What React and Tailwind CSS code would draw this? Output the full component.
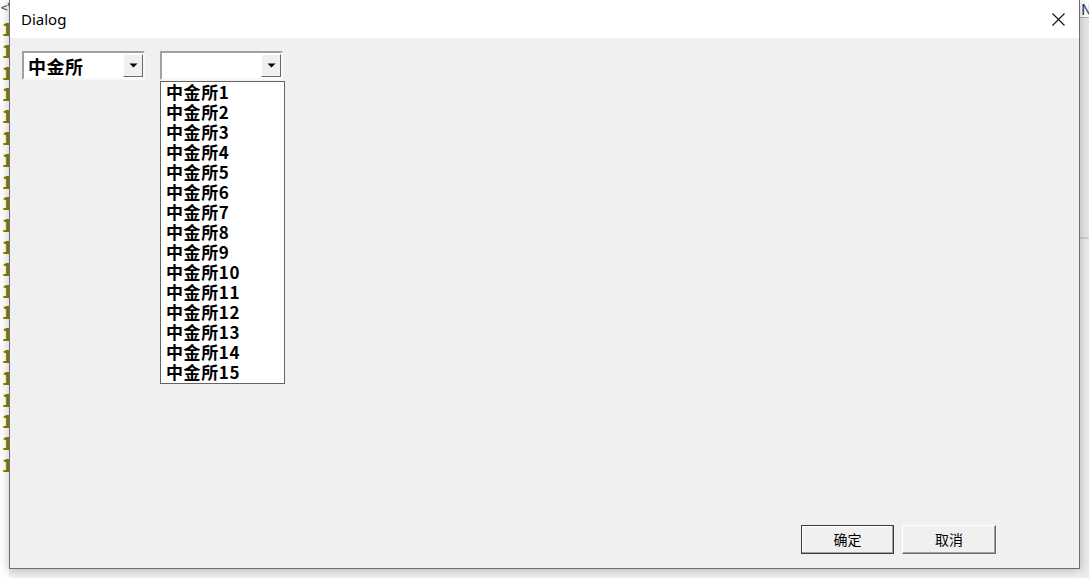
import React from 'react';

const exchanges = Array.from({ length: 15 }, (_, i) => `中金所${i + 1}`);
const marks = Array.from({ length: 21 }, (_, i) => i);

// small raised arrow button used by both combo boxes
const DropArrow = () => (
  <div className="w-[20px] h-[23px] bg-[#f0f0f0] border border-t-white border-l-white border-r-[#696969] border-b-[#696969] flex items-center justify-center">
    <svg width="9" height="5" viewBox="0 0 9 5">
      <path d="M0.5 0.5h8L4.5 4.5z" fill="#000" />
    </svg>
  </div>
);

const Combo = ({ value }) => (
  <div className="w-[123px] h-[29px] border-2 border-t-[#a0a0a0] border-l-[#a0a0a0] border-r-[#f8f8f8] border-b-[#f8f8f8] bg-white flex items-center justify-between">
    <span className="pl-[4px] text-[18px] font-bold leading-none tracking-[0.5px] text-black">{value}</span>
    <DropArrow />
  </div>
);

export default function App() {
  return (
    <div
      className="w-[1089px] h-[578px] bg-[#ececec] flex overflow-hidden"
      style={{ fontFamily: '"Noto Sans CJK SC", "Noto Sans", sans-serif' }}
    >
      {/* behind the dialog: left list window */}
      <div className="w-[9px] h-[578px] bg-white flex flex-col shrink-0 overflow-hidden">
        <div className="h-[19px] pl-[1px] text-[12px] leading-[14px] text-[#333]">&lt;V</div>
        {marks.map((m) => (
          <div key={m} className="h-[21.8px] pl-[2px] text-[17px] font-bold leading-[20px] text-[#808000] [text-shadow:1px_0_0_#00807f]">1</div>
        ))}
      </div>

      <div className="flex flex-col shrink-0">
        {/* the dialog window */}
        <div className="w-[1071px] h-[569px] border border-t-0 border-[#6e6e6e] flex flex-col shadow-[0_2px_10px_rgba(0,0,0,0.25)] relative z-10">
          <div className="h-[38px] bg-white flex items-center justify-between pl-[11px] pr-[14px]">
            <span className="text-[15px] text-black" style={{ fontFamily: '"Noto Sans", "Open Sans", sans-serif' }}>Dialog</span>
            <svg width="13" height="13" viewBox="0 0 13 13">
              <path d="M0.5 0.5L12.5 12.5M12.5 0.5L0.5 12.5" stroke="#111" strokeWidth="1.1" />
            </svg>
          </div>

          <div className="flex-1 bg-[#f0f0f0] flex flex-col justify-between pl-[12px] pt-[13px] pb-[14px] pr-[83px]">
            <div className="flex gap-[15px]">
              <Combo value="中金所" />
              <div className="relative">
                <Combo value="" />
                <div className="absolute left-0 top-[30px] w-[125px] h-[303px] bg-white border border-[#646464] flex flex-col pl-[5px]">
                  {exchanges.map((name) => (
                    <div key={name} className="h-[20px] text-[17px] font-bold leading-[20px] tracking-[0.6px] text-black">{name}</div>
                  ))}
                </div>
              </div>
            </div>

            <div className="flex justify-end gap-[8px]">
              <button className="w-[93px] h-[29px] bg-[#f0f0f0] border border-[#3c3c3c] shadow-[inset_-1px_-1px_0_#a0a0a0,inset_1px_1px_0_#fff] text-[14px] text-black">确定</button>
              <button className="w-[94px] h-[29px] bg-[#f0f0f0] border border-t-white border-l-white border-r-[#696969] border-b-[#696969] shadow-[inset_-1px_-1px_0_#a0a0a0] text-[14px] text-black">取消</button>
            </div>
          </div>
        </div>
        <div className="flex-1 bg-[#f3f3f3]" />
      </div>

      {/* behind the dialog: right window edge */}
      <div className="w-[9px] h-[578px] flex flex-col shrink-0 overflow-hidden bg-[#e4e4e4]">
        <div className="h-[18px] bg-white text-[15px] leading-[18px] text-[#1a3a6a] pl-[1px] border-b border-[#9fb3d0]">N</div>
        <div className="h-[219px] bg-[#e8e8e8]" />
        <div className="h-[2px] bg-[#d0d0d0]" />
        <div className="flex-1 bg-[#ececec]" />
      </div>
    </div>
  );
}
